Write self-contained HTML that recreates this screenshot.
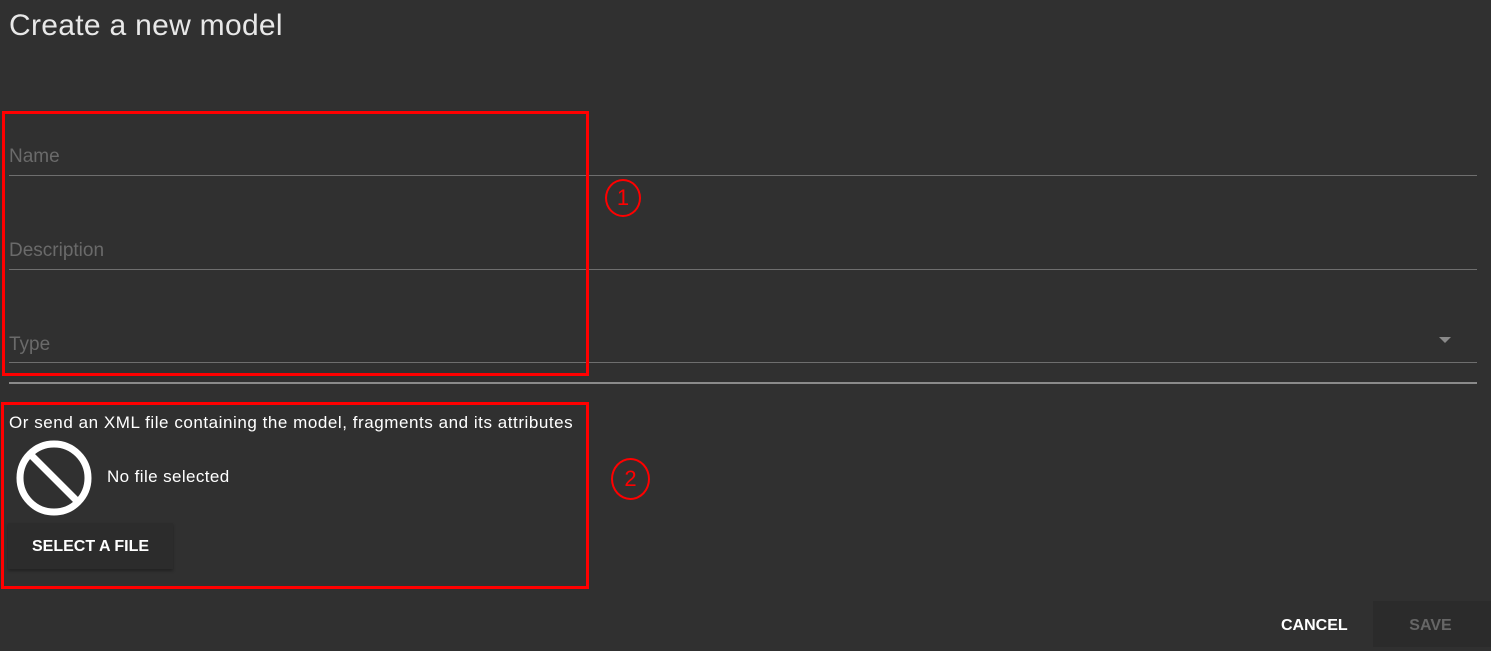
<!DOCTYPE html>
<html><head><style>
body{margin:0;width:1491px;height:647px;background:#303030;font-family:"Liberation Sans",sans-serif;position:relative;overflow:hidden;color:#fff}
.a{position:absolute}
.lbl{color:#6a6a6a;font-size:19px}
.line{height:1px;background:#6e6e6e;left:9px;width:1468px}
</style></head><body>
<div class="a" style="left:9px;top:9px;font-size:30px;color:#e8e8e8;letter-spacing:0.3px">Create a new model</div>
<div class="a lbl" style="left:9px;top:146px">Name</div>
<div class="a line" style="top:175px"></div>
<div class="a lbl" style="left:9px;top:240px">Description</div>
<div class="a line" style="top:269px"></div>
<div class="a lbl" style="left:9px;top:334px">Type</div>
<div class="a" style="left:1439px;top:337px;width:0;height:0;border-left:6px solid transparent;border-right:6px solid transparent;border-top:6px solid #8a8a8a"></div>
<div class="a line" style="top:362px"></div>
<div class="a" style="left:9px;top:382px;width:1468px;height:2px;background:#8a8a8a"></div>
<div class="a" style="left:2px;top:111px;width:581px;height:259px;border:3px solid #f00"></div>
<div class="a" style="left:605px;top:179px;width:32px;height:34px;border:2px solid #f00;border-radius:50%;color:#f00;font-size:22px;text-align:center;line-height:34px">1</div>
<div class="a" style="left:9px;top:413px;font-size:17px;letter-spacing:0.55px">Or send an XML file containing the model, fragments and its attributes</div>
<svg class="a" style="left:13px;top:438px" width="82" height="80"><circle cx="41" cy="40" r="34" fill="none" stroke="#fff" stroke-width="7"/><line x1="18" y1="17" x2="64" y2="63" stroke="#fff" stroke-width="7"/></svg>
<div class="a" style="left:107px;top:467px;font-size:17px;letter-spacing:0.4px">No file selected</div>
<div class="a" style="left:8px;top:523px;width:165px;height:46px;background:#2c2c2c;box-shadow:0 2px 3px rgba(0,0,0,.3);font-size:16px;font-weight:bold;text-align:center;line-height:48px">SELECT A FILE</div>
<div class="a" style="left:1px;top:402px;width:582px;height:181px;border:3px solid #f00"></div>
<div class="a" style="left:611px;top:458px;width:35px;height:38px;border:2px solid #f00;border-radius:50%;color:#f00;font-size:22px;text-align:center;line-height:38px">2</div>
<div class="a" style="left:1281px;top:617px;font-size:16px;font-weight:bold">CANCEL</div>
<div class="a" style="left:1373px;top:601px;width:118px;height:46px;background:#2b2b2b;color:#666;font-size:16px;font-weight:bold;text-align:center;line-height:50px;padding-right:3px;box-sizing:border-box">SAVE</div>
</body></html>
